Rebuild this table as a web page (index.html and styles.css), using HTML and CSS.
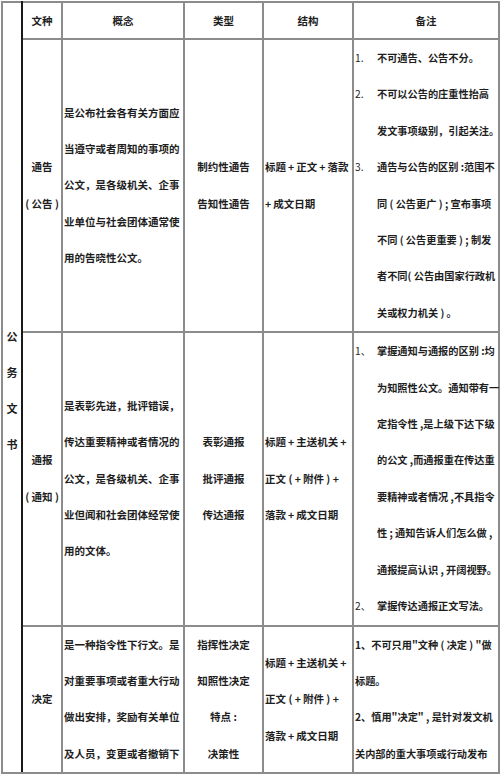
FILE: index.html
```html
<!DOCTYPE html>
<html lang="zh">
<head>
<meta charset="utf-8">
<link rel="stylesheet" href="styles.css">
</head>
<body>
<table class="doc">
  <colgroup>
    <col class="c0"><col class="c1"><col class="c2"><col class="c3"><col class="c4"><col class="c5">
  </colgroup>
  <tr class="head">
    <td class="side" rowspan="4">公<br>务<br>文<br>书</td>
    <td class="center">文种</td>
    <td class="center">概念</td>
    <td class="center">类型</td>
    <td class="center">结构</td>
    <td class="center">备注</td>
  </tr>
  <tr class="r1">
    <td class="center">通告<br>( 公告 )</td>
    <td class="left">是公布社会各有关方面应<br>当遵守或者周知的事项的<br>公文，是各级机关、企事<br>业单位与社会团体通常使<br>用的告晓性公文。</td>
    <td class="center">制约性通告<br>告知性通告</td>
    <td class="left">标题<span class="p">+</span>正文<span class="p">+</span>落款<br><span class="p0">+</span>成文日期</td>
    <td class="notes">
      <div class="item"><span class="num">1.</span><span>不可通告、公告不分。</span></div>
      <div class="item"><span class="num">2.</span><span>不可以公告的庄重性抬高<br>发文事项级别，引起关注。</span></div>
      <div class="item"><span class="num">3.</span><span>通告与公告的区别 :范围不<br>同 ( 公告更广 ) ; 宣布事项<br>不同 ( 公告更重要 ) ; 制发<br>者不同( 公告由国家行政机<br>关或权力机关 ) 。</span></div>
    </td>
  </tr>
  <tr class="r2">
    <td class="center">通报<br>( 通知 )</td>
    <td class="left">是表彰先进，批评错误，<br>传达重要精神或者情况的<br>公文，是各级机关、企事<br>业但闻和社会团体经常使<br>用的文体。</td>
    <td class="center">表彰通报<br>批评通报<br>传达通报</td>
    <td class="left">标题<span class="p">+</span>主送机关<span class="p">+</span><br>正文 ( <span class="p0">+</span>附件 ) <span class="p0">+</span><br>落款<span class="p">+</span>成文日期</td>
    <td class="notes">
      <div class="item"><span class="num">1、</span><span>掌握通知与通报的区别 :均<br>为知照性公文。通知带有一<br>定指令性 ,是上级下达下级<br>的公文 ,而通报重在传达重<br>要精神或者情况 ,不具指令<br>性 ; 通知告诉人们怎么做 ,<br>通报提高认识 , 开阔视野。</span></div>
      <div class="item"><span class="num">2、</span><span>掌握传达通报正文写法。</span></div>
    </td>
  </tr>
  <tr class="r3">
    <td class="center">决定</td>
    <td class="left">是一种指令性下行文。是<br>对重要事项或者重大行动<br>做出安排，奖励有关单位<br>及人员，变更或者撤销下</td>
    <td class="center">指挥性决定<br>知照性决定<br>特点 :<br>决策性</td>
    <td class="left">标题<span class="p">+</span>主送机关<span class="p">+</span><br>正文 ( <span class="p0">+</span>附件 ) <span class="p0">+</span><br>落款<span class="p">+</span>成文日期</td>
    <td class="notes plain">1、不可只用"文种 ( 决定 ) "做<br>标题。<br>2、慎用"决定" , 是针对发文机<br>关内部的重大事项或行动发布</td>
  </tr>
</table>
</body>
</html>
```

FILE: styles.css
```css
html, body {
  margin: 0;
  padding: 0;
  background: #ffffff;
}

body {
  font-family: "Noto Sans CJK SC", "Liberation Sans", sans-serif;
  font-size: 10.5px;
  font-weight: 700;
  color: #1e1e1e;
}

.doc {
  margin: 1px 0 0 1px;
  border-collapse: collapse;
  table-layout: fixed;
  width: 497px;
  border: 2px solid #8c8c8c;
  border-right-color: #3a3a3a;
}

.c0 { width: 20px; }
.c1 { width: 40px; }
.c2 { width: 122px; }
.c3 { width: 79px; }
.c4 { width: 90px; }
.c5 { width: 146px; }

.doc td {
  border: 2px solid #8c8c8c;
  padding: 0;
  line-height: 36.4px;
  vertical-align: middle;
  white-space: nowrap;
  overflow: hidden;
}

.doc td.side {
  border-right: 2px solid #1a1a1a;
  text-align: center;
  line-height: 36px;
  font-size: 11px;
  padding-top: 4px;
}

.head td {
  height: 35px;
  line-height: 35px;
}

.center {
  text-align: center;
}

.doc td.left {
  text-align: left;
  padding-left: 1px;
}

.p {
  padding: 0 2px;
}

.p0 {
  padding-right: 2px;
}

.doc td.notes {
  vertical-align: top;
  text-align: left;
  padding-left: 1px;
  font-size: 10.2px;
  overflow: visible;
}

.doc td.notes.plain {
  vertical-align: middle;
}

.item {
  display: flex;
}

.num {
  flex: 0 0 22px;
  font-weight: 400;
}

.r3 td {
  height: 144px;
}
```
